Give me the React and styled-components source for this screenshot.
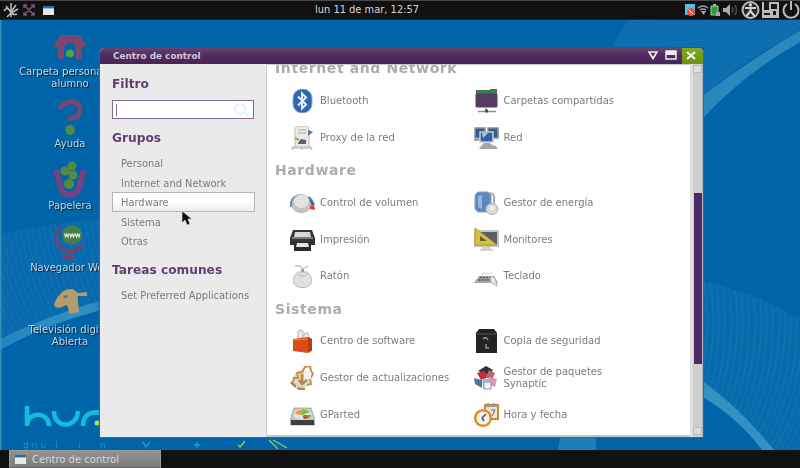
import React from "react";
import styled, { createGlobalStyle } from "styled-components";

const Global = createGlobalStyle`
  * { box-sizing: border-box; }
  body { margin: 0; overflow: hidden; font-family: "DejaVu Sans", Verdana, sans-serif; font-size: 10px; }
  svg { display: block; flex: none; }
`;

const Screen = styled.div`
  width: 800px;
  height: 468px;
  display: flex;
  flex-direction: column;
  background: #0064a9;
  overflow: hidden;
`;

const TopBar = styled.header`
  height: 20px;
  flex: none;
  display: grid;
  grid-template-columns: 1fr 104px 1fr;
  align-items: center;
  background: #111;
  border-top: 1px solid #4a4a4a;
  border-bottom: 1px solid #0b2a42;
  color: #d6d6d6;
`;

const Launchers = styled.div`
  display: flex;
  align-items: center;
  gap: 4px;
  padding-left: 3px;
`;

const Clock = styled.div`
  font-size: 9.9px;
  line-height: 18px;
  white-space: nowrap;
  margin-left: -33px;
`;

const Tray = styled.div`
  display: flex;
  align-items: center;
  justify-content: flex-end;
  gap: 1px;
`;

const Desktop = styled.main`
  position: relative;
  flex: 1;
  overflow: hidden;
`;

const Wallpaper = styled.svg`
  position: absolute;
  inset: 0;
`;

const Shortcuts = styled.div`
  position: relative;
  width: 140px;
  padding-top: 14px;
  display: grid;
  grid-template-rows: 64px 63px 63px 65px 64px;
`;

const Shortcut = styled.div`
  display: flex;
  flex-direction: column;
  align-items: center;
  color: #c3d6e4;
  line-height: 12px;
  text-align: center;
  white-space: pre;
  text-shadow: 1px 1px 1px #05233c;
`;

const ShortcutIcon = styled.div`
  height: ${(p) => p.$h}px;
`;

const Window = styled.section`
  position: absolute;
  left: 99px;
  top: 28px;
  width: 605px;
  height: 390px;
  display: flex;
  flex-direction: column;
  border: 1px solid #6d4a80;
  border-top: 0;
  border-radius: 5px 5px 0 0;
  overflow: hidden;
  background: #eaeaea;
`;

const TitleBar = styled.div`
  height: 16px;
  flex: none;
  display: flex;
  align-items: center;
  padding-left: 13px;
  background: linear-gradient(#684570, #512b62 45%, #482459);
  color: #d0c6d5;
  font-size: 8.9px;
  font-weight: bold;
`;

const TitleText = styled.span`
  flex: 1;
  line-height: 15px;
`;

const WindowButton = styled.span`
  width: ${(p) => p.$w}px;
  height: 16px;
  display: flex;
  align-items: center;
  justify-content: center;
  padding: 0 ${(p) => p.$shift || 0}px 2px 0;
  background: ${(p) => (p.$close ? "linear-gradient(#85a626, #6b910e)" : "none")};
`;

const Body = styled.div`
  flex: 1;
  min-height: 0;
  display: flex;
`;

const Sidebar = styled.aside`
  width: 167px;
  flex: none;
  padding: 11px 12px 0;
  border-right: 1px solid #cfcfcf;
`;

const SideHeading = styled.h2`
  margin: ${(p) => p.$top || 0}px 0 0;
  font-size: 12.2px;
  line-height: 19px;
  height: 18px;
  color: #5f4070;
  white-space: nowrap;
`;

const SearchBox = styled.div`
  width: 142px;
  height: 19px;
  margin-top: 7px;
  padding: 0 4px 0 3px;
  display: flex;
  align-items: center;
  justify-content: space-between;
  background: #fff;
  border: 1.5px solid #806a90;
`;

const Caret = styled.span`
  width: 1px;
  height: 12px;
  background: #777;
`;

const SideList = styled.div`
  margin-top: ${(p) => p.$top}px;
  width: 143px;
`;

const SideItem = styled.div`
  height: 19.6px;
  line-height: 19px;
  padding-left: 8px;
  font-size: 9.9px;
  color: #7c7c7c;
  white-space: nowrap;
  border: 1px solid ${(p) => (p.$active ? "#b5b5b5" : "transparent")};
  background: ${(p) => (p.$active ? "linear-gradient(#fff 45%, #ececec)" : "none")};
`;

const Content = styled.div`
  flex: 1;
  min-width: 0;
  background: #fff;
  border-top: 1px solid #c9c9c9;
  border-bottom: 2px solid #c4c4c4;
  padding-left: 8px;
  overflow: hidden;
`;

const Scroller = styled.div`
  margin-top: -10.9px;
`;

const GroupHeading = styled.h3`
  margin: 0;
  height: 28.4px;
  line-height: 28px;
  font-size: 14px;
  letter-spacing: 0.6px;
  color: #acacac;
`;

const Grid = styled.div`
  display: grid;
  grid-template-columns: 183.5px 200px;
  grid-auto-rows: 36.75px;
  padding-left: 15px;
`;

const Item = styled.div`
  display: flex;
  align-items: center;
  gap: 5px;
  color: #7c7c7c;
  line-height: 12px;
  white-space: pre;
`;

const ScrollTrack = styled.div`
  width: 13px;
  display: flex;
  flex-direction: column;
  align-items: center;
  background: #cecece;
  border-left: 3px solid #dedede;
  border-right: 1px solid #b8b0bd;
`;

const ScrollArrow = styled.div`
  width: 9px;
  height: 8px;
  border: 1px solid #bcbcbc;
  background: #ddd;
  margin-top: ${(p) => p.$top}px;
`;

const Thumb = styled.div`
  margin-top: 120px;
  width: 8px;
  height: 171px;
  background: #4e2866;
`;

const TaskBar = styled.footer`
  height: 18px;
  flex: none;
  padding-left: 9px;
  background: #111;
`;

const Task = styled.div`
  width: 152px;
  height: 18px;
  display: flex;
  align-items: center;
  gap: 6px;
  padding-left: 5px;
  border: 1px solid #9a9a9a;
  border-bottom-color: #666;
  background: linear-gradient(#929292, #7c7c7c);
  color: #d8d8d8;
  line-height: 15px;
`;

const Pointer = styled.svg`
  position: absolute;
  left: 181px;
  top: 190px;
`;

const MiniWindow = () => (
  <svg width="11" height="10" viewBox="0 0 11 10">
    <path fill="#e9e9e2" d="M0 1h11v9H0z" />
    <path fill="#3168b0" d="M0 1h11v2.4H0z" />
  </svg>
);

const shortcutArt = {
  home: (
    <svg width="34" height="26" viewBox="0 0 34 26">
      <path fill="#7b466f" d="M7 1h20l7 12h-5v12h-6V15a6 6 0 0 0-12 0v10H5V13H0z" />
      <circle cx="17" cy="19.500" r="4" fill="#5e9b3c" />
    </svg>
  ),
  help: (
    <svg width="26" height="38" viewBox="0 0 26 38">
      <path fill="none" stroke="#7b466f" strokeWidth="5" d="M3 11C6 2 22 1 23 11c0 7-5 10-12 9" />
      <circle cx="13" cy="32" r="5" fill="#55894a" />
    </svg>
  ),
  trash: (
    <svg width="36" height="37" viewBox="0 0 36 37">
      <path fill="none" stroke="#744381" strokeWidth="6" d="M4 9l5 18c3 9 15 9 18 0l5-18" />
      <g fill="#558b3f">
        <circle cx="13" cy="10" r="4.500" /><circle cx="20" cy="5" r="4.500" />
        <circle cx="21" cy="14" r="4.500" /><circle cx="17" cy="23" r="5" />
      </g>
    </svg>
  ),
  web: (
    <svg width="32" height="36" viewBox="0 0 32 36">
      <path d="M6 3C-1 12 2 24 12 27c7 2 13-1 16-7" fill="none" stroke="#74446d" strokeWidth="3.200" />
      <path d="M15 27v4M10 34q5-6 10 0z" fill="#74446d" stroke="#74446d" strokeWidth="2" />
      <circle cx="18" cy="11" r="10" fill="#467e4b" />
      <path d="M10.500 9.500l1 3.500 1.300-3 1.300 3 1-3.500M15.900 9.500l1 3.500 1.300-3 1.300 3 1-3.500M21.300 9.500l1 3.500 1.300-3 1.300 3 1-3.500" fill="none" stroke="#dfe9df" strokeWidth="1.100" />
    </svg>
  ),
  tv: (
    <svg width="34" height="26" viewBox="0 0 34 26">
      <path fill="#b39d69" d="M1 16C3 9 9 0 17 0c4 0 6 2 8 4l9-1v4h-9c-1 4 1 10 1 16l-9 2c-2-3-1-7-4-9-4 3-11 4-12 0z" />
      <path d="M10 8l3-2 2 1-2 2z" fill="#3b7398" />
    </svg>
  ),
};

const shortcuts = [
  { art: "home", h: 32, label: "Carpeta personal de\nalumno" },
  { art: "help", h: 40, label: "Ayuda" },
  { art: "trash", h: 39, label: "Papelera" },
  { art: "web", h: 38, label: "Navegador Web" },
  { art: "tv", h: 35, label: "Televisión digital\nAbierta" },
];

const itemArt = {
  bluetooth: (
    <>
      <rect x="3" y="0" width="19" height="24" rx="9" fill="#2f68b0" stroke="#88abd2" />
      <path d="M8 7.500l8 8-4 4v-15l4 4-8 8" fill="none" stroke="#e6eefa" strokeWidth="2" />
    </>
  ),
  proxy: (
    <>
      <path d="M2 20h19l2 3H1z" fill="#d8d8d5" />
      <path d="M5 2l3-2h9l2 2v19H5z" fill="#eaeae6" stroke="#bcbcb6" />
      <path d="M8 4h8M8 7h8" stroke="#aaa" />
      <path d="M18 4l5 2-5 4z" fill="#5679a4" />
      <path d="M8 17l3-4 5 1v4H8z" fill="#76517f" />
      <path d="M5 12l4 2" stroke="#86bd3d" strokeWidth="2" />
      <path d="M4 21l-2 3M20 21l2 3M12 21v3" stroke="#aaa" />
    </>
  ),
  share: (
    <>
      <path d="M2 1h13l2-1h6v6H2z" fill="#3d7b50" />
      <rect x="1.500" y="4.500" width="22" height="14" rx="1.500" fill="#573b63" />
      <path d="M4 22.500h18M12 19v4" stroke="#7f9a8a" strokeWidth="1.300" />
      <circle cx="12.500" cy="22" r="1.700" fill="#445" />
    </>
  ),
  network: (
    <>
      <path d="M1 2h10v10H1zM14 2h10v10H14z" fill="#315d95" stroke="#8c908d" strokeWidth="1.500" />
      <path d="M6 6h13v10H6z" fill="#2c63ac" stroke="#c5cac8" strokeWidth="1.500" />
      <path d="M8 7h6l-5 5z" fill="#a9c6e7" />
      <path d="M10 17h6l2 2 4 1 2 3H5l3-4zM0 13h5v2H0z" fill="#a5a7a2" />
    </>
  ),
  volume: (
    <>
      <path d="M1 16C0 9 4 5 10 4M18 6c4 2 5 5 6 8" fill="none" stroke="#5b89bd" strokeWidth="2" />
      <path d="M18 7l5 7" stroke="#3464aa" strokeWidth="3" />
      <ellipse cx="11.500" cy="14" rx="9.500" ry="7.500" fill="#c4c6c1" stroke="#a3a5a0" strokeWidth=".8" />
      <ellipse cx="11.500" cy="10.500" rx="8" ry="7" fill="#e2e4df" stroke="#b4b6b2" strokeWidth=".7" />
      <path d="M20 15l4-1 1 5-5-1z" fill="#e23a35" />
    </>
  ),
  power: (
    <>
      <path d="M14 6c0-5 6-5 6 1v6" fill="none" stroke="#a8aaa8" strokeWidth="2" />
      <path d="M1 4l3-3h10l3 3v15l-3 2H4l-3-3z" fill="#5b8ac2" stroke="#8fa0ad" />
      <path d="M4 5l4-1v14l-4-2z" fill="#94b5dc" />
      <ellipse cx="18" cy="18" rx="6" ry="5.500" fill="#dadbd7" stroke="#aeb0ac" />
      <circle cx="18" cy="17" r="2.500" fill="#eee" />
    </>
  ),
  printer: (
    <>
      <path d="M3 2h19l3 8v7H0v-7z" fill="#343633" />
      <path d="M5 4h15l1 5H4z" fill="#d5d8d3" />
      <path d="M2 10h21" stroke="#91948f" strokeWidth="1.500" />
      <path d="M4 14h17v9H4z" fill="#292b28" />
      <path d="M7 15h11l1 4H6z" fill="#e3e5e2" />
    </>
  ),
  mouse: (
    <>
      <path d="M5 2l5 0 3 3 5-3M13 4v4" fill="none" stroke="#c0c0bd" strokeWidth="1.300" />
      <path d="M8 8h9c6 4 8 15-4 15.500C0 24 2 12 8 8z" fill="#e0e1de" stroke="#b8bab6" />
      <path d="M7 10q6 4 11 0" fill="none" stroke="#bbb" />
      <circle cx="12.500" cy="6.500" r="1.500" fill="#6c9acb" />
    </>
  ),
  monitor: (
    <>
      <rect x="1" y="3" width="23" height="15" fill="#596068" stroke="#c3c5c2" strokeWidth="2" />
      <path d="M9 19h7l4 4H5z" fill="#d1d3d0" />
      <path d="M1 0v17h22z" fill="#d9c13b" stroke="#ad982a" />
      <path d="M6 8v5h7z" fill="#655e38" />
    </>
  ),
  keyboard: (
    <>
      <path d="M5 12h15l4 7H0z" fill="#a5a7a4" />
      <path d="M6 13.500h12M4 16h14" stroke="#5c5e5c" strokeWidth="1.500" strokeDasharray="2 1" />
      <path d="M8 11c2-5 5 2 10-3" fill="none" stroke="#ccc" />
      <path d="M16 12l5 2 2 8-6-4z" fill="#eee" stroke="#aaa" />
    </>
  ),
  software: (
    <>
      <path d="M8 9V3q3-4 5 0v6M14 8q0-5 4-4l1 5" fill="#ecebe8" stroke="#c4c3c0" strokeWidth="1.300" />
      <path d="M3 10l15-2 4 2v12l-4 2-15-2z" fill="#db4b16" />
      <path d="M18 8v15l4-2V10z" fill="#b63c13" />
      <path d="M4 11l14-1" stroke="#f58b47" />
    </>
  ),
  safe: (
    <>
      <path d="M2 4l3-4h15l3 4v20H2z" fill="#222421" />
      <path d="M3 5h19" stroke="#535550" />
      <path d="M9 10q3-3 5 1M12 15v4h3" fill="none" stroke="#969893" strokeWidth="1.400" />
    </>
  ),
  update: (
    <>
      <ellipse cx="12" cy="13" rx="9" ry="9" fill="#dddcd4" />
      <path d="M3 16l1-4 4 0-1-5 5-1 3-5 5-1 1 5 2 3-3 5 1 5-4 1" fill="none" stroke="#c4934b" strokeWidth="2" />
      <path d="M1 16l5 5M7 22l4 1h4" stroke="#b78645" strokeWidth="2.500" fill="none" />
      <path d="M14 5h7v8h-7z" fill="#f5f3ec" />
      <path d="M12 8v10M9 14l3 4 5-4" fill="none" stroke="#bd8841" strokeWidth="2.500" />
    </>
  ),
  synaptic: (
    <>
      <path d="M4 5l8-5 7 4-4 5z" fill="#2d3335" />
      <path d="M3 7l7-2 5 6-8 3z" fill="#bd3338" />
      <path d="M15 4l6 3-3 7-6-3z" fill="#c16569" />
      <path d="M0 12l8 2v8l-7-4z" fill="#4d76a4" />
      <path d="M8 13l9 0v10H9z" fill="#a9bbcc" />
      <path d="M15 11l8 2-2 8-6-2z" fill="#df91b6" />
      <path d="M10 16h7v7h-7z" fill="#f0f3f4" stroke="#929b9f" />
    </>
  ),
  disk: (
    <>
      <path d="M4 5h17l4 12v5H0v-5z" fill="#c5c7c4" stroke="#888" strokeWidth=".6" />
      <path d="M1 17h23v5H1z" fill="#3d403c" />
      <ellipse cx="12.500" cy="11.500" rx="9" ry="5.500" fill="#dfe4da" />
      <path d="M12 12l8-3q-5-4-9-2z" fill="#72c339" />
      <path d="M13 12h8q-1 4-6 4z" fill="#5ead42" />
      <path d="M5 11q1-4 6-4l1 5z" fill="#e79843" />
      <circle cx="15" cy="14" r="2" fill="#d8493d" />
    </>
  ),
  clock: (
    <>
      <rect x="11" y="2" width="13" height="14" fill="#eae7dd" stroke="#c48b36" strokeWidth="2" />
      <path d="M12 3h12M14 0v4M20 0v4" stroke="#9b9b98" strokeWidth="2" />
      <path d="M17 7h4l-3 6" fill="none" stroke="#667" />
      <circle cx="9" cy="15" r="7.800" fill="#eff2f3" stroke="#e78d2b" strokeWidth="2.500" />
      <path d="M8 15l4-4M8 15l2 3" stroke="#444d54" strokeWidth="1.500" />
    </>
  ),
};

const groups = [
  {
    name: "Internet and Network",
    items: [
      ["bluetooth", "Bluetooth"], ["share", "Carpetas compartidas"],
      ["proxy", "Proxy de la red"], ["network", "Red"],
    ],
  },
  {
    name: "Hardware",
    items: [
      ["volume", "Control de volumen"], ["power", "Gestor de energía"],
      ["printer", "Impresión"], ["monitor", "Monitores"],
      ["mouse", "Ratón"], ["keyboard", "Teclado"],
    ],
  },
  {
    name: "Sistema",
    items: [
      ["software", "Centro de software"], ["safe", "Copia de seguridad"],
      ["update", "Gestor de actualizaciones"], ["synaptic", "Gestor de paquetes\nSynaptic"],
      ["disk", "GParted"], ["clock", "Hora y fecha"],
    ],
  },
];

const categories = ["Personal", "Internet and Network", "Hardware", "Sistema", "Otras"];

const fan = (count, draw) => Array.from({ length: count }, (_, i) => <path key={i} d={draw(i)} />);

function DesktopWallpaper() {
  return (
    <Wallpaper width="800" height="430" viewBox="0 20 800 430">
      <defs>
        <linearGradient id="band" x1="0" x2="1">
          <stop offset="0" stopColor="#2287be" />
          <stop offset=".8" stopColor="#3291c3" />
          <stop offset="1" stopColor="#1777b5" />
        </linearGradient>
        <clipPath id="leftFan"><path d="M0 234Q50 222 110 219V302Q60 312 0 338z" /></clipPath>
        <clipPath id="topFan"><path d="M628 20H800V32Q745 58 704 96V47H612z" /></clipPath>
        <clipPath id="rightFan"><path d="M704 281Q755 293 800 319V450H762Q740 415 704 388z" /></clipPath>
      </defs>
      <path fill="#0869ac" d="M0 234Q50 222 110 219V302Q60 312 0 338z" />
      <path fill="#0c6eaf" d="M628 20H800V32Q745 58 704 96V47H612z" />
      <path fill="#086bac" d="M704 281Q755 293 800 319V450H762Q740 415 704 388z" />
      <g fill="none" stroke="#2384bb" strokeWidth=".8" opacity=".6">
        <g clipPath="url(#leftFan)">{fan(30, (i) => `M${i * 6 - 60} 215Q${i * 6 - 50} 290 ${i * 6 - 10} 350`)}</g>
        <g clipPath="url(#topFan)" opacity=".6">{fan(20, (i) => `M600 ${i * 6 - 10}Q700 ${i * 6 - 5} 800 ${i * 6 - 35}`)}</g>
        <g clipPath="url(#rightFan)">{fan(30, (i) => `M${i * 6 + 660} 270Q${i * 6 + 680} 370 ${i * 6 + 625} 460`)}</g>
      </g>
      <path fill="url(#band)" d="M0 339Q48 315 110 298V308Q50 322 0 350z" />
      <path fill="#2b88bd" d="M800 31Q752 58 704 95V117Q745 73 800 42z" />
      <path fill="#3390c1" d="M704 382Q742 410 774 450H762Q738 418 704 398z" />
      <path fill="#1c7fbb" d="M560 438h36v12h-38z" />
      <g fill="none" stroke="#12bddb" strokeWidth="4.600">
        <path d="M27 406v20M27 426c0-15 22-15 22 0M54 411c0 18 23 18 24 0M83 426c0-13 9-15 20-13" />
      </g>
      <circle cx="97" cy="423" r="2.500" fill="#b9d957" />
      <g fill="none" stroke="#0c9ec6" strokeWidth="1.500">
        <path d="M194 445h6M197 442v6M143 442l3 5 4-5" />
      </g>
      <path d="M238 445l2 2 5-6M269 440l9 9M273 440l14 8" fill="none" stroke="#a3cc4c" strokeWidth="1.200" />
      <text x="23" y="448" fill="#089fca" fontSize="9" letterSpacing="3">gnu-l</text>
      <text x="78" y="448" fill="#089fca" fontSize="9">i</text>
      <text x="100" y="448" fill="#089fca" fontSize="9">n</text>
      <path fill="#4c98c3" opacity=".7" d="M0 20h1.500v430H0z" />
    </Wallpaper>
  );
}

function TrayIcons() {
  return (
    <svg width="117" height="18" viewBox="0 0 117 18">
      <path fill="#51bfe7" d="M2 3h10v11H2z" />
      <circle cx="8" cy="11" r="4" fill="#e35545" />
      <path d="M6 9l4 4" stroke="#fff" />
      <path d="M15 7q5-4 10 0M17 9q3-2 6 0" fill="none" stroke="#9b9b9b" strokeWidth="1.600" />
      <path d="M18 10h5l-2.500 4z" fill="#aaa" />
      <path fill="#17a829" stroke="#c0c0c0" d="M28 5h7v9h-7z" />
      <path fill="#aaa" d="M30 3h3v2h-3zM33 11h4v4h-4zM40 7h3l4-4v12l-4-4h-3z" />
      <path d="M49 6q2 3 0 6M52 4q3 5 0 10" fill="none" stroke="#4a4a4a" strokeWidth="1.500" />
      <circle cx="67.500" cy="9" r="8" fill="#252525" stroke="#bcbcbc" strokeWidth="2" />
      <g fill="none" stroke="#d0d0d0" strokeWidth="2.200"><path d="M62 7h11M67.500 7v4M67.500 10l-4 5M67.500 10l4 5" /></g>
      <circle cx="67.500" cy="4" r="1.800" fill="#d0d0d0" />
      <path fill="#bcbcbc" d="M79 1h17v16H79z" />
      <path fill="#181818" d="M81 1h5v8h-5zM88 3h6v5h-6zM81 12h6v2h-6zM90 10h3v4h-3z" />
      <path d="M104 3a7.500 7.500 0 1 0 8 0M108 0v9" fill="none" stroke="#bababa" strokeWidth="2" />
    </svg>
  );
}

export default function App() {
  return (
    <Screen>
      <Global />
      <TopBar>
        <Launchers>
          <svg width="16" height="16" viewBox="0 0 16 16" fill="none" stroke="#bdbdbd" strokeWidth="1.500">
            <path d="M1 9q3-5 6 0t7 3M3 4l5 6M8 1v8M13 3L8 10M15 7l-7 4-4 4M8 10v5" />
          </svg>
          <svg width="12" height="12" viewBox="0 0 12 12" fill="none" stroke="#79577c" strokeWidth="1.500">
            <path d="M1 4V1h3M8 1h3v3M11 8v3H8M4 11H1V8M2 2l8 8M10 2l-8 8" />
          </svg>
          <span />
          <MiniWindow />
        </Launchers>
        <Clock>lun 11 de mar, 12:57</Clock>
        <Tray><TrayIcons /></Tray>
      </TopBar>

      <Desktop>
        <DesktopWallpaper />
        <Shortcuts>
          {shortcuts.map((s) => (
            <Shortcut key={s.label}>
              <ShortcutIcon $h={s.h}>{shortcutArt[s.art]}</ShortcutIcon>
              {s.label}
            </Shortcut>
          ))}
        </Shortcuts>

        <Window>
          <TitleBar>
            <TitleText>Centro de control</TitleText>
            <WindowButton $w={16} $shift={3}>
              <svg width="10" height="9" viewBox="0 0 10 9"><path d="M1 1h8L5 7.500z" fill="none" stroke="#eee" strokeWidth="1.700" /></svg>
            </WindowButton>
            <WindowButton $w={20} $shift={3}>
              <svg width="12" height="10" viewBox="0 0 12 10"><path d="M1 1h10v8H1z" fill="none" stroke="#eee" strokeWidth="1.500" /><path fill="#eee" d="M1 1h10v4H1z" /></svg>
            </WindowButton>
            <WindowButton $w={21} $shift={4} $close>
              <svg width="10" height="9" viewBox="0 0 10 9"><path d="M1 1l8 7M9 1L1 8" stroke="#f2f6e6" strokeWidth="2.200" /></svg>
            </WindowButton>
          </TitleBar>
          <Body>
            <Sidebar>
              <SideHeading>Filtro</SideHeading>
              <SearchBox>
                <Caret />
                <svg width="16" height="14" viewBox="0 0 16 14" fill="none" stroke="#d4f2f4" strokeWidth="1.500"><circle cx="7" cy="6" r="5" /><path d="M11 9l4 4" /></svg>
              </SearchBox>
              <SideHeading $top={10}>Grupos</SideHeading>
              <SideList $top={6}>
                {categories.map((c) => <SideItem key={c} $active={c === "Hardware"}>{c}</SideItem>)}
              </SideList>
              <SideHeading $top={10}>Tareas comunes</SideHeading>
              <SideList $top={6}><SideItem>Set Preferred Applications</SideItem></SideList>
            </Sidebar>
            <Content>
              <Scroller>
                {groups.map((g) => (
                  <React.Fragment key={g.name}>
                    <GroupHeading>{g.name}</GroupHeading>
                    <Grid>
                      {g.items.map(([icon, label]) => (
                        <Item key={label}>
                          <svg width="25" height="24" viewBox="0 0 25 24">{itemArt[icon]}</svg>
                          {label}
                        </Item>
                      ))}
                    </Grid>
                  </React.Fragment>
                ))}
              </Scroller>
            </Content>
            <ScrollTrack>
              <ScrollArrow $top={1} />
              <Thumb />
              <ScrollArrow $top={63} />
            </ScrollTrack>
          </Body>
        </Window>
        <Pointer width="11" height="16" viewBox="0 0 11 16">
          <path d="M1 1v12l3-3 2 5 3-1-2-5h4z" fill="#111" stroke="#ddd" strokeWidth=".7" />
        </Pointer>
      </Desktop>

      <TaskBar>
        <Task><MiniWindow />Centro de control</Task>
      </TaskBar>
    </Screen>
  );
}
